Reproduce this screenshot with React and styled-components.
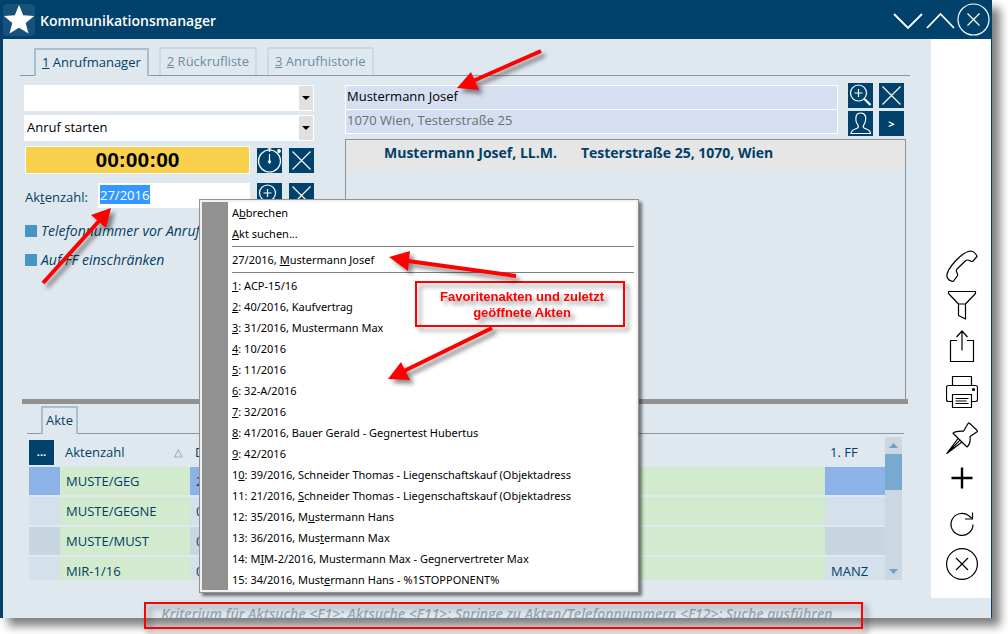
import React from "react";
import styled, { createGlobalStyle } from "styled-components";

const navy = "#00426b";
const ink = "#003f66";
const surface = "#e0e8ef";
const uiFont = '"Open Sans", "Noto Sans", sans-serif';
const menuFont = '"Noto Sans", "Open Sans", sans-serif';

const GlobalStyle = createGlobalStyle`
  * { box-sizing: border-box; }
  body { margin: 0; background: #fff; font-family: ${uiFont}; font-size: 13px; line-height: 20px; color: ${ink}; }
  button, input, select { font: inherit; color: inherit; margin: 0; padding: 0; border: 0; border-radius: 0; }
  button { cursor: pointer; background: none; }
`;

const Page = styled.div`
  position: relative;
  padding: 0 16px 16px 0;
`;

const Window = styled.main`
  background: ${surface};
  border-left: 3px solid ${navy};
  border-right: 1px solid ${navy};
  box-shadow: 8px 8px 9px rgba(0, 0, 0, 0.5);
`;

const TitleBar = styled.header`
  display: flex;
  align-items: center;
  height: 39px;
  padding-right: 1px;
  background: ${navy};
  color: #fff;
`;

const Logo = styled.span`
  display: flex;
  width: 32px;
  height: 32px;
  border-radius: 4px;
  background: #16527c;
`;

const Title = styled.h1`
  flex: 1;
  margin: 0 0 0 5px;
  padding-top: 3px;
  font-size: 14px;
  font-weight: 600;
`;

const WindowButton = styled.button`
  display: flex;
  svg { display: block; }
`;

const Body = styled.div`
  display: flex;
`;

const Content = styled.div`
  flex: 1;
  min-width: 0;
  padding: 8px 0 18px;
`;

const Tabs = styled.nav`
  display: flex;
  align-items: flex-end;
  gap: 10px;
  margin: ${(p) => (p.$inner ? "0 27px 0 24px" : "0 21px 0 17px")};
  padding-left: 14px;
  border-bottom: 1px solid #8d979f;
`;

const Tab = styled.button`
  height: 28px;
  margin-bottom: ${(p) => (p.$active ? -1 : 0)}px;
  padding: 0 ${(p) => (p.$narrow ? 3 : 6)}px 2px;
  border: 2px solid ${(p) => (p.$active ? "#a9bdca" : "#cdd9e2")};
  border-bottom: 0;
  background: ${surface};
  color: ${(p) => (p.$active ? ink : "#6c8da3")};
`;

const Upper = styled.section`
  display: flex;
  gap: 31px;
  padding: 7px 25px 0 21px;
`;

const CallForm = styled.form`
  display: flex;
  flex-direction: column;
  width: 290px;
  padding-top: 2px;
`;

const SelectBox = styled.div`
  position: relative;
  margin-bottom: 4px;
  select {
    display: block;
    width: 100%;
    height: 26px;
    padding: 0 18px 3px 3px;
    appearance: none;
    background: #fff;
    color: #000;
  }
  span {
    position: absolute;
    top: 1px;
    right: 1px;
    bottom: 1px;
    display: flex;
    align-items: center;
    justify-content: center;
    width: 14px;
    background: #e0e0e0;
    pointer-events: none;
  }
`;

const Row = styled.div`
  display: flex;
  align-items: center;
  gap: 7px;
  margin-top: ${(p) => p.$top}px;
`;

const Timer = styled.output`
  flex: 1;
  height: 28px;
  margin-left: 1px;
  border: 1px solid #fff;
  background: #f8d04c;
  color: #000;
  font: 700 21px/26px "Liberation Sans", sans-serif;
  text-align: center;
`;

const Square = styled.button`
  display: flex;
  flex: none;
  align-items: center;
  justify-content: center;
  width: 25px;
  height: 25px;
  background: ${navy};
  color: #fff;
  font-size: 11px;
  font-weight: 700;
`;

const CaseLabel = styled.label`
  width: 67px;
  padding: 2px 0 0 1px;
`;

const CaseInput = styled.div`
  flex: 1;
  min-width: 0;
  height: 25px;
  padding: 2px;
  background: #fff;
  input {
    display: block;
    width: 50px;
    height: 19px;
    background: #3399ff;
    color: #fff;
    outline: 0;
  }
`;

const Checks = styled.div`
  display: flex;
  flex-direction: column;
  gap: 9px;
  padding: 13px 0 0 1px;
`;

const Check = styled.label`
  display: flex;
  align-items: center;
  gap: 4px;
  height: 20px;
  font-size: 14px;
  font-style: italic;
  white-space: nowrap;
  input {
    width: 12px;
    height: 12px;
    appearance: none;
    background: #4595c6;
  }
`;

const PersonArea = styled.div`
  display: flex;
  flex: 1;
  flex-direction: column;
  gap: 3px;
  min-width: 0;
`;

const PersonTop = styled.div`
  display: flex;
  gap: 10px;
  padding-right: 2px;
`;

const Fields = styled.div`
  display: flex;
  flex: 1;
  flex-direction: column;
  margin-top: 2px;
  height: 49px;
  border: 1px solid #fff;
  background: #fff;
  gap: 1px;
  input {
    flex: 1;
    min-height: 0;
    width: 100%;
    padding: 0 1px 3px;
    background: #d6def1;
    color: #000;
  }
  input + input { color: #6e6e6e; }
`;

const SquareGrid = styled.div`
  display: grid;
  grid-template-columns: 25px 25px;
  gap: 3px 6px;
`;

const Matches = styled.div`
  min-height: 260px;
  border: 1px solid #8d9297;
  border-bottom: 0;
`;

const Match = styled.div`
  display: flex;
  gap: 24px;
  padding: 3px 38px 5px;
  background: #e6e6e6;
  font-size: 14px;
  font-weight: 700;
`;

const Splitter = styled.hr`
  height: 5px;
  margin: 0 23px 2px 19px;
  border: 0;
  background: #919191;
`;

const TableArea = styled.div`
  display: flex;
  height: 143px;
  margin: 3px 29px 0 26px;
  overflow: hidden;
`;

const Grid = styled.table`
  flex: 1;
  align-self: flex-start;
  width: 100%;
  border-collapse: separate;
  border-spacing: 0;
  table-layout: fixed;
  th, td {
    height: 30px;
    padding: 0 0 0 6px;
    text-align: left;
    font-weight: 400;
    white-space: nowrap;
  }
  th { padding-left: 5px; }
  th:first-child { padding: 0; }
  .sort { float: right; padding-right: 8px; font-size: 11px; color: #7b868f; }
`;

const rowTone = { selected: "#8cb3e8", light: "#d4e1ea", dark: "#c8d6e2" };

const DataRow = styled.tr`
  td {
    background: ${(p) => rowTone[p.$tone]};
    background-clip: padding-box;
    border-bottom: 2px solid transparent;
  }
  td:nth-child(2), td:nth-child(4) { background-color: #d2ebce; }
`;

const ScrollBar = styled.div`
  display: flex;
  flex: none;
  flex-direction: column;
  align-items: center;
  width: 17px;
  background: #ccd8e1;
`;

const ScrollArrow = styled.button`
  display: flex;
  align-items: center;
  justify-content: center;
  width: 17px;
  height: 17px;
`;

const Thumb = styled.div`
  width: 100%;
  height: 36px;
  margin-bottom: auto;
  background: #78aad0;
`;

const SideBar = styled.aside`
  display: flex;
  flex: none;
  flex-direction: column;
  justify-content: flex-end;
  gap: 14px;
  width: 60px;
  padding: 0 0 18px 15px;
  background: #fff;
`;

const ToolGroup = styled.div`
  display: flex;
  flex-direction: column;
  gap: 8px;
`;

const Tool = styled.button`
  display: block;
  width: 32px;
  height: 32px;
  svg { display: block; }
`;

const StatusBar = styled.footer`
  height: 20px;
  padding-top: 6px;
  overflow: hidden;
  color: #9aaab8;
  font-size: 14px;
  font-style: italic;
  font-weight: 600;
  text-align: center;
  white-space: nowrap;
`;

const Menu = styled.div`
  position: absolute;
  top: 199px;
  left: 199px;
  width: 440px;
  padding: 2px;
  border: 1px solid #919191;
  background: #f0f0f0;
  box-shadow: 3px 3px 3px rgba(0, 0, 0, 0.5);
`;

const MenuList = styled.ul`
  margin: 0;
  padding: 0 2px 0 4px;
  list-style: none;
  border-left: 26px solid #919191;
  background: #fff;
`;

const MenuItem = styled.button`
  display: block;
  width: 100%;
  height: 21px;
  color: #000;
  font: 11px/21px ${menuFont};
  text-align: left;
  white-space: nowrap;
`;

const Divider = styled.li`
  height: 1px;
  margin: 2px 0;
  background: #808080;
`;

const Arrows = styled.svg`
  position: absolute;
  top: 0;
  left: 0;
  pointer-events: none;
  filter: drop-shadow(4px 4px 2px rgba(0, 0, 0, 0.45));
`;

const Callout = styled.div`
  position: absolute;
  top: 281px;
  left: 415px;
  width: 210px;
  padding: 6px 0 4px 4px;
  border: 2px solid #f00;
  color: #f00;
  font: 700 13px/16px "Liberation Sans", sans-serif;
  text-align: center;
  filter: drop-shadow(4px 4px 2px rgba(0, 0, 0, 0.4));
`;

const StatusFrame = styled.div`
  position: absolute;
  right: 145px;
  bottom: 5px;
  left: 144px;
  height: 27px;
  border: 2px solid #f00;
  pointer-events: none;
  filter: drop-shadow(4px 4px 3px rgba(0, 0, 0, 0.5));
`;

const Cross = () => (
  <svg width="25" height="25" fill="none" stroke="#fff" strokeWidth="1.1">
    <path d="M3.5 3.5 21.5 21.5M21.5 3.5 3.5 21.5" />
  </svg>
);

const Zoom = () => (
  <svg width="25" height="25" fill="none" stroke="#fff" strokeWidth="1.2">
    <circle cx="10.5" cy="10" r="8" />
    <path d="M6.5 10h8M10.5 6v8" />
    <path d="m16 15.5 1.5 1.5" />
    <path d="m17 16.500 5.500 5.500" strokeWidth="2.200" />
  </svg>
);

const Stopwatch = () => (
  <svg width="25" height="25" fill="none" stroke="#fff" strokeWidth="1.2">
    <circle cx="12.500" cy="13" r="11" />
    <path d="M12.500 0v4M10.500 1h4M12.500 6v9" />
    <path d="m11 13 1.500 3 1.500-3z" fill="#fff" strokeWidth=".6" />
    <circle cx="22" cy="3" r="1.300" fill="#fff" />
  </svg>
);

const Person = () => (
  <svg width="25" height="25" fill="none" stroke="#fff" strokeWidth="1.2">
    <path d="M3 22.500c0-4 4-4 6.500-5.500 1.200-.8 1-2.200.3-3.200C8 11.500 7.500 8 8.200 5 9 2.500 10.800 2 12.800 2s3.800.7 4.600 3c.8 3-.1 6.500-1.600 8.800-.7 1-.9 2.400.3 3.200 2.500 1.500 6.400 1.500 6.400 5.500z" />
  </svg>
);

const toolIcons = {
  Telefon: (
    <path d="M24.500 1c2.500.3 5.500 2.500 6.500 5.500l-4 4.500c-1 1-2.400.4-3.600-.4-1.200-.7-2.700-.9-3.900.2L11 19c-1 1.300-.8 2.500 0 3.800.7 1.300 1 2.300.2 3.300l-4 5.400C4 31 1.500 29 .8 26c0-4 3.200-9 8.200-14.500S20 1.500 24.500 1z" />
  ),
  Filter: <path d="M2.500 1.500h27v2L19.500 14h-7L2.500 3.500zM12.500 14v11.500l7 3.500V14" />,
  Teilen: <path d="M11 10.500H4.500v21h23v-21H21M16 20.500V1.500M10.500 7 16 1l5.500 6" />,
  Drucken: (
    <>
      <path d="M6.500 9.500v-9h19v9M6.500 25.500h-4q-2 0-2-2v-12q0-2 2-2h27q2 0 2 2v12q0 2-2 2h-4M6.500 18.500h19v13h-19zM9.500 22.500h13M9.500 25h11M9.500 27.500h13" />
      <circle cx="27.500" cy="13.500" r="1" fill="#000" />
    </>
  ),
  Anheften: (
    <path d="M22.500.8c1 0 2.500 1.700 4.500 3.700s4.500 3.500 4.500 5L24 14.500c.4 3.500.3 8-3 10.500L7 11.200C9.500 9.200 13.500 9 17.500 9.200zM12 16.500.8 31.500 16 20M.8 31.500 14 18.200" />
  ),
  Neu: <path d="M16 5.500v21M5.500 16h21" strokeWidth="2.400" />,
  Aktualisieren: <path d="M27 16.500A11 11 0 1 1 22.500 7.500l3 2.500M26.500 4.500V11H19" />,
  Schließen: (
    <>
      <circle cx="16" cy="16" r="15.400" />
      <path d="m10 10 12 12M22 10 10 22" />
    </>
  ),
};

const toolGroups = [["Telefon", "Filter", "Teilen"], ["Drucken"], ["Anheften", "Neu"], ["Aktualisieren", "Schließen"]];

/* Each entry is split as [before, access key, after]. */
const menuEntries = [
  ["A", "b", "brechen"],
  ["", "A", "kt suchen..."],
  null,
  ["27/2016, ", "M", "ustermann Josef"],
  null,
  ["", "1", ": ACP-15/16"],
  ["", "2", ": 40/2016, Kaufvertrag"],
  ["", "3", ": 31/2016, Mustermann Max"],
  ["", "4", ": 10/2016"],
  ["", "5", ": 11/2016"],
  ["", "6", ": 32-A/2016"],
  ["", "7", ": 32/2016"],
  ["", "8", ": 41/2016, Bauer Gerald - Gegnertest Hubertus"],
  ["", "9", ": 42/2016"],
  ["1", "0", ": 39/2016, Schneider Thomas - Liegenschaftskauf (Objektadress"],
  ["11: 21/2016, ", "S", "chneider Thomas - Liegenschaftskauf (Objektadress"],
  ["12: 35/2016, M", "u", "stermann Hans"],
  ["13: 36/2016, Mus", "t", "ermann Max"],
  ["14: M", "I", "M-2/2016, Mustermann Max - Gegnervertreter Max"],
  ["15: 34/2016, Must", "e", "rmann Hans - %1STOPPONENT%"],
];

const rows = [
  { tone: "selected", name: "MUSTE/GEG", d: "2", ff: "" },
  { tone: "light", name: "MUSTE/GEGNE", d: "0", ff: "" },
  { tone: "dark", name: "MUSTE/MUST", d: "0", ff: "" },
  { tone: "light", name: "MIR-1/16", d: "0", ff: "MANZ" },
];

const arrows = [
  { line: "M541 51 473 81", head: "457,88 471,72 479,90" },
  { line: "M43 283 100 220", head: "111,208 91,215 106,228" },
  { line: "M516 276 408 261", head: "389,257 410,251 408,271" },
  { line: "M492 328 404 371", head: "388,379 401,362 410,380" },
];

const Caret = () => (
  <svg width="8" height="4"><path d="M0 0h8L4 4z" fill="#000" /></svg>
);

export default function App() {
  return (
    <Page>
      <GlobalStyle />
      <Window>
        <TitleBar>
          <Logo>
            <svg width="32" height="32">
              <path d="m16 1 4.200 10.200 11 .8-8.500 7 2.800 10.500L16 23.700 6.500 29.500 9.300 19 1 12l10.800-.8z" fill="#fff" />
            </svg>
          </Logo>
          <Title>Kommunikationsmanager</Title>
          <WindowButton aria-label="Minimieren">
            <svg width="33" height="36" fill="none" stroke="#fff" strokeWidth="1.800"><path d="m3 12 14 14 14-14" /></svg>
          </WindowButton>
          <WindowButton aria-label="Maximieren">
            <svg width="33" height="36" fill="none" stroke="#fff" strokeWidth="1.800"><path d="m3 26 13.500-14L30 26" /></svg>
          </WindowButton>
          <WindowButton aria-label="Fenster schließen">
            <svg width="33" height="36" fill="none" stroke="#fff" strokeWidth="1.200">
              <circle cx="16.500" cy="17.500" r="15.500" /><path d="m10.500 11.500 12 12M22.500 11.500l-12 12" />
            </svg>
          </WindowButton>
        </TitleBar>
        <Body>
          <Content>
            <Tabs>
              <Tab $active><u>1</u> Anrufmanager</Tab>
              <Tab><u>2</u> Rückrufliste</Tab>
              <Tab><u>3</u> Anrufhistorie</Tab>
            </Tabs>
            <Upper>
              <CallForm>
                <SelectBox>
                  <select aria-label="Telefonnummer"><option></option></select>
                  <span><Caret /></span>
                </SelectBox>
                <SelectBox>
                  <select aria-label="Anruf"><option>Anruf starten</option></select>
                  <span><Caret /></span>
                </SelectBox>
                <Row $top={1}>
                  <Timer>00:00:00</Timer>
                  <Square type="button" aria-label="Stoppuhr"><Stopwatch /></Square>
                  <Square type="button" aria-label="Zeit löschen"><Cross /></Square>
                </Row>
                <Row $top={9}>
                  <CaseLabel htmlFor="akt">Ak<u>t</u>enzahl:</CaseLabel>
                  <CaseInput><input id="akt" defaultValue="27/2016" /></CaseInput>
                  <Square type="button" aria-label="Akt suchen"><Zoom /></Square>
                  <Square type="button" aria-label="Akt löschen"><Cross /></Square>
                </Row>
                <Checks>
                  <Check><input type="checkbox" />Telefonnummer vor Anruf</Check>
                  <Check><input type="checkbox" />Auf FF einschränken</Check>
                </Checks>
              </CallForm>
              <PersonArea>
                <PersonTop>
                  <Fields>
                    <input aria-label="Person" defaultValue="Mustermann Josef" />
                    <input aria-label="Adresse" defaultValue="1070 Wien, Testerstraße 25" />
                  </Fields>
                  <SquareGrid>
                    <Square aria-label="Person suchen"><Zoom /></Square>
                    <Square aria-label="Person löschen"><Cross /></Square>
                    <Square aria-label="Person öffnen"><Person /></Square>
                    <Square>&gt;</Square>
                  </SquareGrid>
                </PersonTop>
                <Matches>
                  <Match><span>Mustermann Josef, LL.M.</span><span>Testerstraße 25, 1070, Wien</span></Match>
                </Matches>
              </PersonArea>
            </Upper>
            <Splitter />
            <Tabs $inner>
              <Tab $active $narrow>Akte</Tab>
            </Tabs>
            <TableArea>
              <Grid>
                <colgroup>
                  <col style={{ width: 31 }} /><col style={{ width: 130 }} /><col style={{ width: 210 }} /><col /><col style={{ width: 60 }} />
                </colgroup>
                <thead>
                  <tr>
                    <th><Square>...</Square></th>
                    <th>Aktenzahl<span className="sort">△</span></th>
                    <th>D</th>
                    <th></th>
                    <th>1. FF</th>
                  </tr>
                </thead>
                <tbody>
                  {rows.map((r) => (
                    <DataRow key={r.name} $tone={r.tone}>
                      <td></td><td>{r.name}</td><td>{r.d}</td><td></td><td>{r.ff}</td>
                    </DataRow>
                  ))}
                </tbody>
              </Grid>
              <ScrollBar>
                <ScrollArrow aria-label="Nach oben"><svg width="9" height="5"><path d="M0 5h9L4.500 0z" fill="#6ba3cc" /></svg></ScrollArrow>
                <Thumb />
                <ScrollArrow aria-label="Nach unten"><svg width="9" height="5"><path d="M0 0h9L4.500 5z" fill="#6ba3cc" /></svg></ScrollArrow>
              </ScrollBar>
            </TableArea>
          </Content>
          <SideBar>
            {toolGroups.map((group) => (
              <ToolGroup key={group[0]}>
                {group.map((name) => (
                  <Tool key={name} aria-label={name}>
                    <svg width="32" height="32" fill="none" stroke="#000" strokeWidth="1.200" strokeLinejoin="round">{toolIcons[name]}</svg>
                  </Tool>
                ))}
              </ToolGroup>
            ))}
          </SideBar>
        </Body>
        <StatusBar>
          Kriterium für Aktsuche &lt;F1&gt;: Aktsuche &lt;F11&gt;: Springe zu Akten/Telefonnummern &lt;F12&gt;: Suche ausführen
        </StatusBar>
      </Window>
      <Menu>
        <MenuList>
          {menuEntries.map((e, i) =>
            e ? (
              <li key={i}><MenuItem>{e[0]}<u>{e[1]}</u>{e[2]}</MenuItem></li>
            ) : (
              <Divider key={i} role="separator" />
            )
          )}
        </MenuList>
      </Menu>
      <Callout>Favoritenakten und zuletzt<br />geöffnete Akten</Callout>
      <StatusFrame />
      <Arrows width="660" height="400">
        {arrows.map((a) => (
          <g key={a.head}>
            <path d={a.line} stroke="#f00" strokeWidth="4" />
            <polygon points={a.head} fill="#f00" />
          </g>
        ))}
      </Arrows>
    </Page>
  );
}
